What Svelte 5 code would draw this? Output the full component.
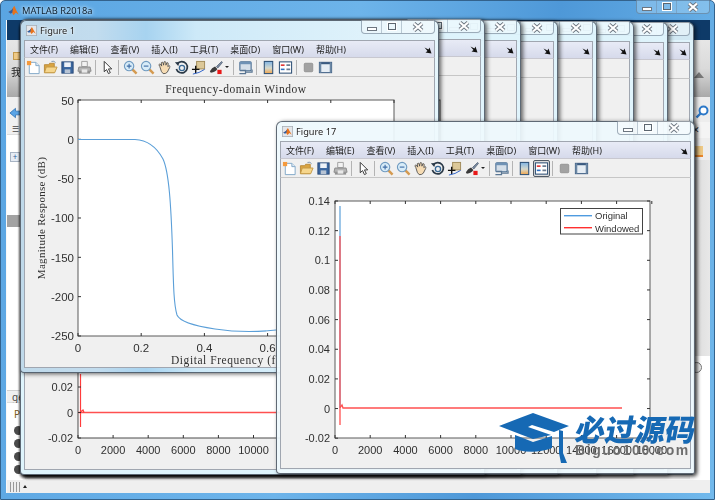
<script>
  const menus = ['文件(F)', '编辑(E)', '查看(V)', '插入(I)', '工具(T)', '桌面(D)', '窗口(W)', '帮助(H)'];
  const tools = [
    'new', 'open', 'save', 'print', '|', 'arrow', '|', 'zoomin', 'zoomout', 'hand', 'rotate', 'cursor', 'brush', '^', '|',
    'link', '|', 'colorbar', 'legend', '|', 'hide', 'show'
  ];
  const backs = [
    { right: 694, top: 22 },
    { right: 668, top: 22 },
    { right: 634, top: 21 },
    { right: 597, top: 21 },
    { right: 558, top: 21 },
    { right: 521, top: 20 },
    { right: 485, top: 19 }
  ];
  const range = (n, f) => Array.from({ length: n }, (_, i) => f(i));

  const f1y = [50, 0, -50, -100, -150, -200, -250].map((v, i) => ({ v, y: 100 + i * 39.33 }));
  const f1x = ['0', '0.2', '0.4', '0.6'].map((v, i) => ({ v, x: 78 + i * 63.2 }));
  const f1curve = 'M78 139.5 L135 139.5 C146 140 156 146 163 159 C169 172 171 205 172.5 250 C173.5 290 174 305 177 315 C180 322 195 326 215 329 C235 332 258 332 276 330';

  const f17y = ['0.14', '0.12', '0.1', '0.08', '0.06', '0.04', '0.02', '0', '-0.02'].map((v, i) => ({ v, y: 201 + i * 29.65 }));
  const f17x = range(10, (i) => ({ v: String(i * 2000), x: 335 + i * 35.2 }));

  const bx = range(6, (i) => ({ v: String(i * 2000), x: 78 + i * 35.1 }));
  const by = [{ v: '0.02', y: 387 }, { v: '0', y: 412.5 }, { v: '-0.02', y: 438 }];
</script>

{#snippet logo()}
  <svg class="logo" viewBox="0 0 14 14" aria-hidden="true">
    <rect x="0.5" y="0.5" width="13" height="13" fill="#e4e6ea" stroke="#a8aeb6" />
    <path d="M1.5 8.5 L5 6.5 L7.5 2.5 L10 7 L12.5 11 L9.5 9 L7 11.5 L5 8.5Z" fill="#e8731c" />
    <path d="M1.5 8.5 L5 6.5 L6.5 4.5 L5.5 8.5 L4 10Z" fill="#2a5fa8" />
  </svg>
{/snippet}

{#snippet caption()}
  <div class="caption">
    <span class="cap cap-min"><i></i></span>
    <span class="cap cap-max"><i></i></span>
    <span class="cap cap-close">
      <svg viewBox="0 0 12 10" aria-hidden="true">
        <path d="M2 1.5 L10 8.5 M10 1.5 L2 8.5" stroke="#6d7680" stroke-width="4" />
        <path d="M2 1.5 L10 8.5 M10 1.5 L2 8.5" stroke="#fff" stroke-width="2.2" />
      </svg>
    </span>
  </div>
{/snippet}

{#snippet dock()}
  <svg class="dock" viewBox="0 0 8 8" aria-hidden="true"><path d="M0.5 1.5 L4.5 3.5 L5.5 1.5 L7.5 7.5 L1.5 6.5 L3.5 5 Z" fill="#111" /></svg>
{/snippet}

{#snippet chrome(title)}
  <header class="titlebar">
    {@render logo()}
    <span class="wintitle">{title}</span>
    {@render caption()}
  </header>
  <div class="menubar">
    {#each menus as m}<span>{m}</span>{/each}
    {@render dock()}
  </div>
  <div class="toolbar">
    {#each tools as t}
      {#if t === '|'}
        <span class="sep"></span>
      {:else if t === '^'}
        <span class="caret"></span>
      {:else}
        <span class="tool" class:on={title === 'Figure 17' && t === 'legend'}>
          <svg viewBox="0 0 16 16" aria-hidden="true"><use href={'#i-' + t} /></svg>
        </span>
      {/if}
    {/each}
  </div>
{/snippet}

{#snippet backChrome()}
  <header class="titlebar">{@render caption()}</header>
  <div class="menubar">{@render dock()}</div>
  <div class="toolbar"></div>
{/snippet}

<div class="screen">
  <svg class="defs" width="0" height="0" aria-hidden="true">
    <symbol id="i-new" viewBox="0 0 16 16">
      <path d="M3.5 2.5 H10.5 L14 6 V14.5 H3.5Z" fill="#fff" stroke="#7fa6c8" />
      <path d="M10.5 2.5 V6 H14" fill="#dfeaf4" stroke="#7fa6c8" />
      <rect x="1" y="1" width="4.5" height="4.5" fill="#f59a3c" />
    </symbol>
    <symbol id="i-open" viewBox="0 0 16 16">
      <path d="M1.5 5 H6 L7 3.5 H12 V13.5 H1.5Z" fill="#d9a441" stroke="#b98a3a" />
      <path d="M1.5 13.5 L3.5 7.5 H15 L12.5 13.5Z" fill="#f6d68c" stroke="#c49a48" />
      <path d="M9 1.5 Q12 0.5 13.5 3" fill="none" stroke="#7d93ad" />
    </symbol>
    <symbol id="i-save" viewBox="0 0 16 16">
      <rect x="2" y="2" width="12" height="12" fill="#3a669f" stroke="#2a4a78" />
      <rect x="4.5" y="2.5" width="7" height="5" fill="#eef2f8" />
      <rect x="5" y="10" width="6" height="4" fill="#b8c4d4" />
    </symbol>
    <symbol id="i-print" viewBox="0 0 16 16">
      <path d="M5 1.5 H11 V7 H5Z" fill="#f2f2f2" stroke="#a0a0a0" />
      <path d="M2 7.5 H14 L15 12 H1Z" fill="#b4b4b4" stroke="#8a8a8a" />
      <rect x="2" y="12" width="12" height="2.5" fill="#909090" />
      <rect x="5" y="10" width="6" height="3.5" fill="#e8e8e8" />
    </symbol>
    <symbol id="i-arrow" viewBox="0 0 16 16">
      <path d="M4.5 1.5 L4.5 12.5 L7 10.2 L9 14.5 L11 13.5 L9 9.5 L12.5 9.5Z" fill="#fff" stroke="#333" />
    </symbol>
    <symbol id="i-zoomin" viewBox="0 0 16 16">
      <path d="M9.5 9.5 L14.5 14.5" stroke="#d49a50" stroke-width="2.6" />
      <circle cx="6.5" cy="6.5" r="5" fill="#d8ecf8" stroke="#6f9ac0" stroke-width="1.2" />
      <path d="M4 6.5 H9 M6.5 4 V9" stroke="#3f6ca6" stroke-width="1.2" />
    </symbol>
    <symbol id="i-zoomout" viewBox="0 0 16 16">
      <path d="M9.5 9.5 L14.5 14.5" stroke="#d49a50" stroke-width="2.6" />
      <circle cx="6.5" cy="6.5" r="5" fill="#d8ecf8" stroke="#6f9ac0" stroke-width="1.2" />
      <path d="M4 6.5 H9" stroke="#3f6ca6" stroke-width="1.2" />
    </symbol>
    <symbol id="i-hand" viewBox="0 0 16 16">
      <path d="M3 7 L2 5 Q3 3.5 4 5 L5 6.5 L4.5 3 Q5.5 1.5 6.5 3 L7 5.5 L7.5 2 Q8.5 1 9.5 2.5 L9.5 5.5 L10.5 3 Q12 2.5 12 4 L11.5 7 L13 6 Q14.5 6.5 13.5 8 L11 13 Q9 15 6.5 14.5 Q4.5 13.5 3 7Z" fill="#f6dcb4" stroke="#4a4a4a" stroke-width="0.9" />
    </symbol>
    <symbol id="i-rotate" viewBox="0 0 16 16">
      <path d="M3.5 4 A6 6 0 1 1 2.5 9.5" fill="none" stroke="#2b3a48" stroke-width="1.8" />
      <path d="M1 2.5 L6 2 L4.5 6.5Z" fill="#2b3a48" />
      <circle cx="8.5" cy="8.5" r="2.8" fill="none" stroke="#3a6a96" stroke-width="1.4" />
    </symbol>
    <symbol id="i-cursor" viewBox="0 0 16 16">
      <rect x="6" y="1.5" width="8.5" height="8" fill="#dcc898" stroke="#a08a58" />
      <path d="M1 10 H9 M5 6 V14" stroke="#111" stroke-width="1.5" />
      <path d="M2 15 Q9 14 14.5 10" fill="none" stroke="#2a5fc8" />
    </symbol>
    <symbol id="i-brush" viewBox="0 0 16 16">
      <path d="M9 7 L14.5 1.5 L15.5 2.5 L10.5 8.5Z" fill="#7a8aa0" stroke="#44546a" stroke-width="0.7" />
      <path d="M2 12 Q4 8 7.5 7 L10 9.5 Q8 13 3 13.5Z" fill="#3a3a3a" />
      <rect x="10" y="10.5" width="4.5" height="4.5" fill="#e81818" />
    </symbol>
    <symbol id="i-link" viewBox="0 0 16 16">
      <rect x="2" y="2" width="12" height="9.5" rx="1" fill="#d5dfe9" stroke="#4b6f93" stroke-width="1.2" />
      <rect x="2" y="2" width="12" height="2.5" fill="#6f92b5" />
      <path d="M3 11 H8 V14.5 H1.5 M8 13 H15 V10" fill="none" stroke="#5a7693" stroke-width="1.3" />
    </symbol>
    <symbol id="i-colorbar" viewBox="0 0 16 16">
      <defs>
        <linearGradient id="cb" x1="0" y1="0" x2="0" y2="1">
          <stop offset="0" stop-color="#7fb4e4" />
          <stop offset="0.55" stop-color="#d5d8cc" />
          <stop offset="1" stop-color="#f2a64c" />
        </linearGradient>
      </defs>
      <rect x="3.5" y="1.5" width="9" height="13" fill="url(#cb)" stroke="#2c4f75" stroke-width="1.1" />
    </symbol>
    <symbol id="i-legend" viewBox="0 0 16 16">
      <rect x="1.5" y="2" width="13" height="12" fill="#fff" stroke="#2c4f75" stroke-width="1.1" />
      <path d="M3 5.5 H7" stroke="#e03030" stroke-width="1.7" />
      <path d="M3 10 H7" stroke="#2f6fc0" stroke-width="1.7" />
      <path d="M9 5.5 H13 M9 10 H13" stroke="#6c7c90" stroke-width="1.7" />
    </symbol>
    <symbol id="i-hide" viewBox="0 0 16 16">
      <rect x="3.5" y="3.5" width="9" height="9" rx="1" fill="#a2a2a2" stroke="#929292" />
    </symbol>
    <symbol id="i-show" viewBox="0 0 16 16">
      <rect x="1.5" y="2.5" width="13" height="11" fill="#e6edf4" stroke="#3a5a80" stroke-width="1.1" />
      <rect x="1.5" y="2.5" width="13" height="2" fill="#3a5a80" />
      <rect x="1.5" y="2.5" width="2" height="11" fill="#6c88a5" />
      <rect x="12.5" y="2.5" width="2" height="11" fill="#6c88a5" />
    </symbol>
  </svg>

  <div class="main">
    <header class="main-title">
      <svg class="main-logo" viewBox="0 0 14 14" aria-hidden="true">
        <path d="M0.5 9 L4.5 6.5 L8 1 L11 7.5 L13.5 12 L10 10 L7 13 L5 9.5Z" fill="#e8731c" />
        <path d="M0.5 9 L4.5 6.5 L6.5 4 L5.5 9.5 L3.5 11Z" fill="#2a5fa8" />
      </svg>
      <span class="main-name">MATLAB R2018a</span>
      {@render caption()}
    </header>
    <div class="client">
      <div class="tabs"></div>
      <div class="ribbon">
        <span class="r-yellow"></span>
        <span class="r-char">我</span>
        <span class="r-up"></span>
      </div>
      <div class="body">
        <div class="leftpane">
          <div class="addr">
            <svg viewBox="0 0 14 12" aria-hidden="true"><path d="M1 6 L7 1 V4 H13 V8 H7 V11Z" fill="#5aa4e6" stroke="#2c6fb0" stroke-width="0.8" /></svg>
          </div>
          <div class="lhead"><span class="glyph">☰</span></div>
          <div class="tree"><span class="plus">+</span></div>
          <div class="thumb"></div>
          <div class="tree rest"></div>
          <div class="lhead two">ge</div>
          <div class="listing">
            <span class="pname">P</span>
            <span class="dot"></span><span class="dot"></span><span class="dot"></span><span class="dot"></span>
          </div>
        </div>
        <div class="midpane"></div>
        <div class="rightpane">
          <div class="search">
            <svg viewBox="0 0 14 14" aria-hidden="true"><circle cx="8.5" cy="5.5" r="4" fill="#fff" stroke="#2c78c8" stroke-width="2" /><path d="M5.5 8.5 L1.5 12.5" stroke="#2c78c8" stroke-width="2.4" /></svg>
          </div>
          <div class="rclose">✕</div>
          <div class="ricon"><span></span></div>
          <div class="rcol"></div>
          <div class="rwhite"><span class="rdown"></span></div>
        </div>
      </div>
      <footer class="status">
        <span class="grip"></span>
        <span class="gripcaret"></span>
      </footer>
    </div>
  </div>

  {#each backs as w, i}
    <section class="win" style="left:20px;top:{w.top}px;width:{w.right - 20}px;height:{475 - w.top}px">
      {@render backChrome()}
      <div class="plot">
        {#if i === backs.length - 1}
          <svg class="chart" viewBox="25 76 455 392">
            <rect x="78" y="100" width="362" height="338" fill="#fff" stroke="#4a4a4a" />
            <path d="M78 412.5 H440" stroke="#ff5050" stroke-width="1.3" />
            <path d="M80.5 374 V427 M80.5 412 L83 410 L84 412.5" stroke="#ff3c3c" fill="none" stroke-width="1.2" />
            {#each by as t}
              <text class="tick" x="73" y={t.y + 4} text-anchor="end">{t.v}</text>
              <line x1="78" x2="81" y1={t.y} y2={t.y} stroke="#333" />
            {/each}
            {#each bx as t}
              <text class="tick" x={t.x} y="454" text-anchor="middle">{t.v}</text>
              <line x1={t.x} x2={t.x} y1="438" y2="435" stroke="#333" />
            {/each}
          </svg>
        {/if}
      </div>
    </section>
  {/each}

  <section class="win fig1">
    {@render chrome('Figure 1')}
    <div class="plot">
      <svg class="chart" viewBox="25 77 409 291">
        <rect x="78" y="100" width="316" height="236" fill="#fff" stroke="#5a5a5a" />
        <text class="serif ttl" x="236" y="93" text-anchor="middle">Frequency-domain Window</text>
        {#each f1y as t}
          <text class="tick big" x="74" y={t.y + 4.5} text-anchor="end">{t.v}</text>
          <line x1="78" x2="81" y1={t.y} y2={t.y} stroke="#333" />
        {/each}
        {#each [0, 1, 2, 3, 4, 5] as i}
          <line x1={78 + i * 63.2} x2={78 + i * 63.2} y1="100" y2="103" stroke="#333" />
          <line x1={78 + i * 63.2} x2={78 + i * 63.2} y1="336" y2="333" stroke="#333" />
        {/each}
        {#each f1x as t}
          <text class="tick big" x={t.x} y="352" text-anchor="middle">{t.v}</text>
        {/each}
        <text class="serif lab" x="171" y="364">Digital Frequency (f</text>
        <text class="serif ylab" x="41" y="218" text-anchor="middle" transform="rotate(-90 41 218) translate(0 4)">Magnitude Response (dB)</text>
        <path d={f1curve} fill="none" stroke="#5b9fd8" stroke-width="1.1" />
      </svg>
    </div>
  </section>

  <section class="win fig17">
    {@render chrome('Figure 17')}
    <div class="plot">
      <svg class="chart" viewBox="281 178 410 291">
        <rect x="335" y="201" width="315" height="237" fill="#fff" stroke="#5a5a5a" />
        {#each f17y as t}
          <text class="tick" x="330" y={t.y + 4} text-anchor="end">{t.v}</text>
          <line x1="335" x2="338" y1={t.y} y2={t.y} stroke="#333" />
          <line x1="650" x2="647" y1={t.y} y2={t.y} stroke="#333" />
        {/each}
        {#each f17x as t}
          <text class="tick" x={t.x} y="454" text-anchor="middle">{t.v}</text>
          <line x1={t.x} x2={t.x} y1="438" y2="435" stroke="#333" />
          <line x1={t.x} x2={t.x} y1="201" y2="204" stroke="#333" />
        {/each}
        <path d="M340 206 V408" fill="none" stroke="#5b9fd8" stroke-width="1.2" />
        <path d="M340 236 V425 M340 408 L342 405 L343 408 H622" fill="none" stroke="#ff5050" stroke-width="1.3" />
        <rect x="560.5" y="208.5" width="82" height="25.5" fill="#fff" stroke="#444" />
        <rect x="564" y="215" width="28" height="1.4" fill="#4f9be0" />
        <rect x="564" y="227" width="28" height="1.4" fill="#ff3030" />
        <text class="leg" x="595" y="219">Original</text>
        <text class="leg" x="595" y="232">Windowed</text>
      </svg>
    </div>
  </section>

  <div class="mark">
    <svg class="cap-logo" viewBox="0 0 72 52" aria-hidden="true">
      <path d="M0 13 L34 0 L70 13 L55 19 L33 12 L29 14 L52 22 L34 26Z" fill="#1669b4" />
      <path d="M16 22 L34 29 L53 23 V35 Q34 42 16 36Z" fill="#1669b4" />
      <path d="M60 17 L64 18 V40 L68 50 L62 50 L60 40Z" fill="#1669b4" />
    </svg>
    <div class="mark-text">
      <div class="mark-cn">必过源码</div>
      <div class="mark-en">Biguo100.com</div>
    </div>
  </div>
</div>

<style>
  :global(body) {
    margin: 0;
    background: #fff;
  }

  .screen {
    position: relative;
    width: 715px;
    height: 500px;
    overflow: hidden;
    font-family: "Noto Sans", "Noto Sans CJK SC", sans-serif;
    filter: blur(0.35px);
  }

  .defs {
    position: absolute;
  }

  .main {
    box-sizing: border-box;
    width: 715px;
    height: 500px;
    display: flex;
    flex-direction: column;
    background: linear-gradient(100deg, #5aa5e2 0%, #6db4ea 45%, #4e98d8 70%, #72b9ec 100%);
    border: 1px solid #33628c;
    border-radius: 5px 5px 0 0;
    padding: 0 4px 6px 5px;
  }

  .main-title {
    position: relative;
    height: 19px;
    display: flex;
    align-items: center;
    padding-left: 2px;
    gap: 3px;
    flex: none;
  }

  .main-logo {
    width: 11px;
    height: 11px;
    flex: none;
  }

  .main-name {
    font-size: 9.3px;
    color: #10202e;
    text-shadow: 0 0 5px #cfe8fa, 0 0 3px #cfe8fa;
  }

  .main-title .caption {
    right: 0;
    top: -1px;
    background: rgba(190, 225, 248, 0.35);
  }

  .client {
    flex: 1;
    display: flex;
    flex-direction: column;
    background: #f0f0f0;
    border-left: 1px solid #f8f8f8;
  }

  .tabs {
    height: 20px;
    flex: none;
    background: #0e3a68;
  }

  .ribbon {
    position: relative;
    height: 57px;
    flex: none;
    background: linear-gradient(#e6e6e6, #dadada 50%, #a9a9a9);
  }

  .r-yellow {
    position: absolute;
    left: 6px;
    top: 12px;
    width: 6px;
    height: 6px;
    background: #eec985;
    border: 1px solid #c49a4c;
  }

  .r-char {
    position: absolute;
    left: 4px;
    top: 26px;
    font-size: 10px;
    line-height: 12px;
    color: #222;
  }

  .r-up {
    position: absolute;
    right: 6px;
    top: 32px;
    border: 5px solid transparent;
    border-top: 0;
    border-bottom: 6px solid #777;
  }

  .body {
    flex: 1;
    min-height: 0;
    display: flex;
  }

  .leftpane {
    width: 18px;
    flex: none;
    display: flex;
    flex-direction: column;
  }

  .addr {
    height: 25px;
    display: flex;
    align-items: flex-end;
    padding-left: 2px;
    padding-bottom: 3px;
    box-sizing: border-box;
    background: #f0f0f0;
  }

  .addr svg {
    width: 13px;
    height: 12px;
  }

  .lhead {
    height: 13px;
    background: #f0f0f0;
    font-size: 9px;
    line-height: 13px;
    color: #444;
    padding-left: 5px;
    border-bottom: 1px solid #ddd;
    box-sizing: border-box;
  }

  .lhead.two {
    border-top: 1px solid #d0d0d0;
    font-size: 10px;
  }

  .glyph {
    font-size: 8px;
  }

  .tree {
    height: 80px;
    background: #fff;
    padding: 17px 0 0 3px;
    box-sizing: border-box;
  }

  .tree.rest {
    height: 163px;
    padding: 0;
  }

  .plus {
    display: block;
    width: 8px;
    height: 8px;
    border: 1px solid #a8b4c4;
    background: #e6ecf4;
    font-size: 8px;
    line-height: 8px;
    text-align: center;
    color: #2f5d9c;
  }

  .thumb {
    height: 12px;
    background: #a2a2a2;
  }

  .listing {
    flex: 1;
    background: #fff;
    display: flex;
    flex-direction: column;
    padding: 5px 0 0 7px;
    gap: 4px;
    overflow: hidden;
  }

  .pname {
    font-size: 10px;
    line-height: 12px;
    height: 14px;
    color: #7a5a20;
  }

  .dot {
    width: 9px;
    height: 9px;
    flex: none;
    border-radius: 50%;
    background: #4c4c4c;
  }

  .midpane {
    flex: 1;
  }

  .rightpane {
    width: 20px;
    flex: none;
    display: flex;
    flex-direction: column;
    background: #ededed;
  }

  .search {
    height: 25px;
    display: flex;
    align-items: flex-end;
    justify-content: flex-end;
    padding: 0 1px 3px 0;
    box-sizing: border-box;
  }

  .search svg {
    width: 14px;
    height: 14px;
  }

  .rclose {
    height: 16px;
    font-size: 9px;
    line-height: 16px;
    padding-left: 2px;
    color: #222;
    background: #f4f4f4;
  }

  .ricon {
    height: 22px;
    padding: 8px 0 0 4px;
    box-sizing: border-box;
  }

  .ricon span {
    display: block;
    width: 9px;
    height: 9px;
    background: #eec985;
    border-bottom: 2px solid #e8862c;
  }

  .rcol {
    height: 196px;
    background: linear-gradient(90deg, #d8d8d8, #e8e8e8);
  }

  .rwhite {
    flex: 1;
    background: #fff;
    padding: 6px 0 0 1px;
  }

  .rdown {
    display: block;
    width: 9px;
    height: 9px;
    border: 1px solid #777;
    border-radius: 50%;
    background: #eee;
  }

  .status {
    height: 13px;
    flex: none;
    display: flex;
    align-items: center;
    gap: 2px;
    padding-left: 3px;
    background: #efefef;
    border-top: 1px solid #fff;
  }

  .grip {
    width: 11px;
    height: 10px;
    background: repeating-linear-gradient(90deg, #999 0 1px, #eee 1px 3px);
  }

  .gripcaret {
    border: 2px solid transparent;
    border-top: 0;
    border-bottom: 3px solid #222;
  }

  .win {
    position: absolute;
    box-sizing: border-box;
    display: flex;
    flex-direction: column;
    border: 1px solid rgba(60, 70, 82, 0.8);
    border-radius: 6px 6px 2px 4px;
    background: rgba(222, 243, 252, 0.94);
    box-shadow: 2px 1px 4px rgba(0, 0, 0, 0.6);
  }

  .fig1 {
    left: 20px;
    top: 20px;
    width: 419px;
    height: 353px;
    background: linear-gradient(90deg, #bfd9ea 0%, #c2dcee 18%, #a7d3f0 30%, #cde9f8 42%, #e6f6fc 100%);
  }

  .fig17 {
    left: 276px;
    top: 121px;
    width: 419px;
    height: 353px;
    background: rgba(238, 249, 253, 0.93);
  }

  .titlebar {
    position: relative;
    height: 19px;
    flex: none;
    display: flex;
    align-items: center;
    gap: 3px;
    padding-left: 5px;
  }

  .logo {
    width: 11px;
    height: 11px;
    flex: none;
  }

  .wintitle {
    font-size: 9.2px;
    color: #1c1c1c;
    text-shadow: 0 0 4px #fff, 0 0 2px #fff;
  }

  .caption {
    position: absolute;
    right: 3px;
    top: -1px;
    width: 74px;
    height: 14px;
    box-sizing: border-box;
    display: flex;
    border: 1px solid rgba(90, 110, 130, 0.55);
    border-top: 0;
    border-radius: 0 0 4px 4px;
    background: rgba(255, 255, 255, 0.35);
  }

  .cap {
    display: flex;
    align-items: center;
    justify-content: center;
    border-right: 1px solid rgba(110, 130, 150, 0.4);
    box-sizing: border-box;
  }

  .cap-min,
  .cap-max {
    width: 20px;
  }

  .cap-close {
    flex: 1;
    border-right: 0;
  }

  .cap-close svg {
    width: 12px;
    height: 10px;
  }

  .cap-min i {
    width: 8px;
    height: 2px;
    margin-top: 5px;
    background: #fff;
    border: 1px solid #6d7680;
  }

  .cap-max i {
    width: 6px;
    height: 5px;
    background: transparent;
    border: 1px solid #5c6670;
    box-shadow: 0 0 0 1px #fff;
  }

  .menubar {
    display: flex;
    align-items: center;
    gap: 12px;
    height: 18px;
    flex: none;
    box-sizing: border-box;
    margin: 0 3px;
    padding: 0 5px;
    background: linear-gradient(#e8ebf6, #d6daeb);
    border: 1px solid #a0a6b0;
    border-bottom: 1px solid #c8c8d0;
    font-size: 9px;
    color: #222;
    white-space: nowrap;
    overflow: hidden;
    position: relative;
  }

  .dock {
    position: absolute;
    right: 2px;
    top: 5px;
    width: 8px;
    height: 8px;
  }

  .toolbar {
    display: flex;
    align-items: center;
    height: 19px;
    flex: none;
    box-sizing: border-box;
    margin: 0 3px;
    background: #f0f0f0;
    border-left: 1px solid #a0a6b0;
    border-right: 1px solid #a0a6b0;
    border-bottom: 1px solid #c6c6c6;
    overflow: hidden;
  }

  .tool {
    width: 17px;
    height: 17px;
    flex: none;
    box-sizing: border-box;
    display: flex;
    align-items: center;
    justify-content: center;
  }

  .tool svg {
    width: 15px;
    height: 15px;
  }

  .tool.on {
    border: 1px solid #505a66;
    border-radius: 2px;
    background: #dcdcdc;
  }

  .sep {
    width: 6px;
    height: 15px;
    flex: none;
    background: linear-gradient(90deg, transparent 2px, #b4b4b4 2px 3px, transparent 3px);
  }

  .caret {
    width: 0;
    height: 0;
    flex: none;
    margin: 0 1.25px;
    border-top: 2.5px solid #222;
    border-left: 2.5px solid transparent;
    border-right: 2.5px solid transparent;
  }

  .plot {
    flex: 1;
    min-height: 0;
    margin: 0 3px 4px;
    background: #f0f0f0;
    border: 1px solid #a0a6b0;
    border-top: 0;
    overflow: hidden;
  }

  .chart {
    display: block;
  }

  .fig1 .chart {
    width: 409px;
    height: 291px;
  }

  .fig17 .chart {
    width: 410px;
    height: 291px;
  }

  .win:not(.fig1):not(.fig17) .chart {
    width: 455px;
    height: 392px;
  }

  .tick {
    font-family: "Liberation Sans", sans-serif;
    font-size: 11px;
    fill: #303030;
  }

  .tick.big {
    font-size: 11.5px;
  }

  .serif {
    font-family: "Liberation Serif", serif;
    fill: #303030;
  }

  .ttl,
  .lab {
    font-size: 11.5px;
    letter-spacing: 0.55px;
  }

  .ylab {
    font-size: 11px;
    letter-spacing: 0.3px;
  }

  .leg {
    font-family: "Liberation Sans", sans-serif;
    font-size: 9.5px;
    fill: #303030;
  }

  .mark {
    position: absolute;
    left: 499px;
    top: 413px;
    display: flex;
    gap: 5px;
  }

  .cap-logo {
    width: 72px;
    height: 52px;
    flex: none;
  }

  .mark-text {
    display: flex;
    flex-direction: column;
  }

  .mark-cn {
    font-family: "Noto Sans CJK SC", sans-serif;
    font-weight: 900;
    font-size: 30px;
    line-height: 30px;
    color: #1669b4;
    transform: skewX(-10deg);
    white-space: nowrap;
  }

  .mark-en {
    font-family: "Liberation Sans", sans-serif;
    font-weight: 700;
    font-size: 14px;
    line-height: 15px;
    letter-spacing: 1.6px;
    color: #6e6e6e;
    white-space: nowrap;
    margin-left: -1px;
  }
</style>
